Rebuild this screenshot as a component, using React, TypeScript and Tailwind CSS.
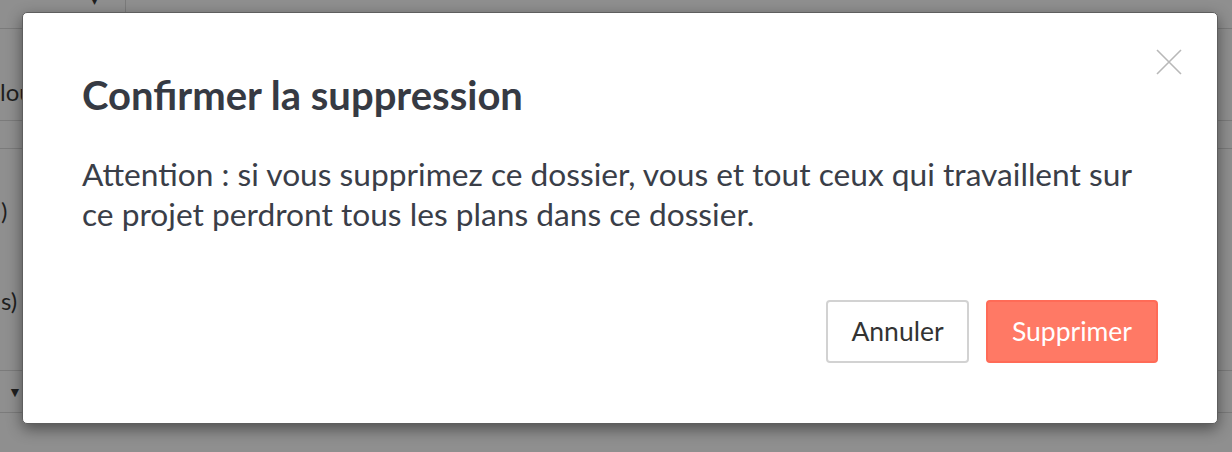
import type React from 'react';

const App: React.FC = () => {
  return (
    <div className="relative h-[452px] w-[1232px] overflow-hidden bg-[#8f8f8f] font-['Lato','Noto_Sans',sans-serif]">
      {/* page behind the backdrop */}
      <div className="flex h-full flex-col text-[#1f1f1f]">
        <div className="flex h-[29px] border-b border-[#7b7b7b]">
          <div className="relative w-[126px] border-r border-[#7b7b7b]">
            <span className="absolute right-[28px] top-[-6px] text-[10px]">▾</span>
          </div>
        </div>
        <div className="flex h-[92px] items-end border-b border-[#7b7b7b] pb-[16px] text-[24px] leading-none">
          <span>lou</span>
        </div>
        <div className="h-[28px] border-b border-[#7b7b7b]" />
        <div className="flex h-[222px] flex-col border-b border-[#7b7b7b] pl-[1px] text-[24px] leading-none">
          <span className="mt-[50px]">)</span>
          <span className="mt-[66px]">s)</span>
        </div>
        <div className="flex h-[42px] items-center border-b border-[#7b7b7b] pl-[8px] text-[14px]">
          ▼
        </div>
      </div>

      {/* modal */}
      <div className="absolute inset-0 px-[22px] pt-[12px]">
        <div className="relative h-[412px] w-[1196px] rounded-[5px] border border-[#5e5e5e] bg-white p-[59px] shadow-[0_5px_15px_rgba(0,0,0,0.45)]">
          <button className="absolute right-[35px] top-[36px] flex h-[26px] w-[26px] items-center justify-center text-[#b8b8b8]">
            <svg width="26" height="26" viewBox="0 0 26 26" fill="none" stroke="currentColor" strokeWidth="1.6">
              <path d="M1 1L25 25M25 1L1 25" />
            </svg>
          </button>
          <h2 className="text-[40px] font-bold leading-[46px] text-[#363a43]">
            Confirmer la suppression
          </h2>
          <p className="mt-[36px] text-[31.7px] leading-[40px] text-[#3a3e48]">
            Attention : si vous supprimez ce dossier, vous et tout ceux qui travaillent sur ce projet perdront tous les plans dans ce dossier.
          </p>
          <div className="mt-[66px] flex justify-end gap-[17px]">
            <button className="h-[63px] w-[143px] rounded-[4px] border-2 border-[#d2d2d2] bg-white text-[26.5px] text-[#333333]">
              Annuler
            </button>
            <button className="h-[63px] w-[172px] rounded-[4px] border-2 border-[#ff6b57] bg-[#ff7965] text-[26.5px] text-white">
              Supprimer
            </button>
          </div>
        </div>
      </div>
    </div>
  );
};

export default App;
